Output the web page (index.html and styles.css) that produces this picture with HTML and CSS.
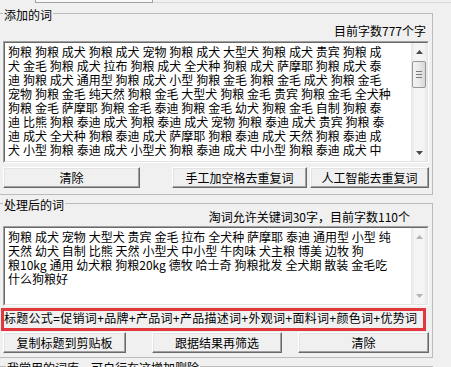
FILE: index.html
```html
<!DOCTYPE html>
<html lang="zh-CN">
<head>
<meta charset="utf-8">
<title>词处理</title>
<link rel="stylesheet" href="styles.css">
</head>
<body>
<div class="topstrip"><div class="tab-a"></div><div class="tab-b"></div></div>

<fieldset class="group g1">
  <legend>添加的词</legend>
  <div class="count c1">目前字数777个字</div>
  <div class="textbox tb1">
    <div class="inner">
      <div class="text">
        <div>狗粮 狗粮 成犬 狗粮 成犬 宠物 狗粮 成犬 大型犬 狗粮 成犬 贵宾 狗粮 成</div>
        <div>犬 金毛 狗粮 成犬 拉布 狗粮 成犬 全犬种 狗粮 成犬 萨摩耶 狗粮 成犬 泰</div>
        <div>迪 狗粮 成犬 通用型 狗粮 成犬 小型 狗粮 金毛 狗粮 金毛 成犬 狗粮 金毛</div>
        <div>宠物 狗粮 金毛 纯天然 狗粮 金毛 大型犬 狗粮 金毛 贵宾 狗粮 金毛 全犬种</div>
        <div>狗粮 金毛 萨摩耶 狗粮 金毛 泰迪 狗粮 金毛 幼犬 狗粮 金毛 自制 狗粮 泰</div>
        <div>迪 比熊 狗粮 泰迪 成犬 狗粮 泰迪 成犬 宠物 狗粮 泰迪 成犬 贵宾 狗粮 泰</div>
        <div>迪 成犬 全犬种 狗粮 泰迪 成犬 萨摩耶 狗粮 泰迪 成犬 天然 狗粮 泰迪 成</div>
        <div>犬 小型 狗粮 泰迪 成犬 小型犬 狗粮 泰迪 成犬 中小型 狗粮 泰迪 成犬 中</div>
      </div>
      <div class="vscroll">
        <span class="sbtn"><svg width="7" height="4" viewBox="0 0 7 4"><polygon points="0,4 3.5,0 7,4" fill="#4a4a4a"/></svg></span>
        <span class="thumb"><svg width="6" height="7" viewBox="0 0 6 7"><rect x="0" y="0" width="6" height="1" fill="#7a7a7a"/><rect x="0" y="3" width="6" height="1" fill="#7a7a7a"/><rect x="0" y="6" width="6" height="1" fill="#7a7a7a"/></svg></span>
        <span class="track-fill"></span>
        <span class="sbtn"><svg width="7" height="4" viewBox="0 0 7 4"><polygon points="0,0 7,0 3.5,4" fill="#4a4a4a"/></svg></span>
      </div>
    </div>
  </div>
  <div class="btnrow r1">
    <button class="btn b-clear1">清除</button>
    <button class="btn b-manual">手工加空格去重复词</button>
    <button class="btn b-ai">人工智能去重复词</button>
  </div>
</fieldset>

<fieldset class="group g2">
  <legend>处理后的词</legend>
  <div class="count c2">淘词允许关键词30字，目前字数110个</div>
  <div class="textbox tb2">
    <div class="inner">
      <div class="text">
        <div>狗粮 成犬 宠物 大型犬 贵宾 金毛 拉布 全犬种 萨摩耶 泰迪 通用型 小型 纯</div>
        <div>天然 幼犬 自制 比熊 天然 小型犬 中小型 牛肉味 犬主粮 博美 边牧 狗</div>
        <div>粮10kg 通用 幼犬粮 狗粮20kg 德牧 哈士奇 狗粮批发 全犬期 散装 金毛吃</div>
        <div>什么狗粮好</div>
      </div>
      <div class="vscroll">
        <span class="sbtn"><svg width="7" height="4" viewBox="0 0 7 4"><polygon points="0,4 3.5,0 7,4" fill="#b4b4b4"/></svg></span>
        <span class="track-fill"></span>
        <span class="sbtn"><svg width="7" height="4" viewBox="0 0 7 4"><polygon points="0,0 7,0 3.5,4" fill="#b4b4b4"/></svg></span>
      </div>
    </div>
  </div>
  <div class="formula">标题公式=促销词+品牌+产品词+产品描述词+外观词+面料词+颜色词+优势词</div>
  <div class="btnrow r2">
    <button class="btn b-copy">复制标题到剪贴板</button>
    <button class="btn b-filter">跟据结果再筛选</button>
    <button class="btn b-clear2">清除</button>
  </div>
</fieldset>

<fieldset class="group g3">
  <legend>我常用的词库，可自行在这增加删除</legend>
</fieldset>
</body>
</html>
```

FILE: styles.css
```css
* { box-sizing: border-box; }
html, body { margin: 0; padding: 0; }
body {
  width: 451px;
  height: 367px;
  overflow: hidden;
  background: #f0f0f0;
  font-family: "Noto Sans CJK SC", "Noto Sans", sans-serif;
  font-size: 12px;
  color: #000;
}

.topstrip { display: flex; height: 3px; }
.tab-a {
  margin-left: 35px;
  width: 118px;
  border: 1px solid #a0a0a0;
  border-top: 0;
  background: #f9f9f9;
}
.tab-b {
  flex: 1;
  border-bottom: 1px solid #d8d8d8;
}

.group {
  margin: 0 0 0 -1px;
  width: 434px;
  min-width: 0;
  border: 1px solid #bcbcbc;
  padding: 0 3px;
}
.group legend {
  padding: 4px 1px 0;
  line-height: 12px;
  font-size: 12px;
}
.g1 { margin-top: 2px; padding-bottom: 6px; }
.g2 { padding-bottom: 4px; }
.g3 legend { margin-left: 3px; }

.count { text-align: right; }
.c1 { line-height: 14px; margin: 3px 3px 3px 0; }
.c2 { line-height: 12px; margin: 0 19px 3px 0; }

.textbox {
  background: #fff;
  border: 1px solid;
  border-color: #a0a0a0 #ffffff #ffffff #a0a0a0;
}
.textbox .inner {
  display: flex;
  height: 100%;
  border: 1px solid;
  border-color: #696969 #e3e3e3 #e3e3e3 #696969;
}
.tb1 { height: 122px; }
.tb2 { height: 80px; }

.text {
  flex: 1;
  min-width: 0;
  padding: 2px 0 0 3px;
  line-height: 14px;
  overflow: hidden;
}
.text > div {
  white-space: nowrap;
  word-spacing: 0.2px;
}

.vscroll {
  width: 16px;
  flex: none;
  display: flex;
  flex-direction: column;
  background: linear-gradient(to right, #e6e6e6, #f5f5f5 25%, #f5f5f5 75%, #ebebeb);
}
.sbtn {
  height: 17px;
  flex: none;
  display: flex;
  align-items: center;
  justify-content: center;
}
.thumb {
  margin: 1px 1px 0 1px;
  height: 27px;
  flex: none;
  border: 1px solid #979797;
  border-radius: 2px;
  background: linear-gradient(to right, #f4f4f4, #e9e9e9 50%, #d8d8d8);
  display: flex;
  align-items: center;
  justify-content: center;
}
.track-fill { flex: 1; }

.btnrow { display: flex; height: 21px; }
.r1 { margin-top: 4px; }
.r2 { margin-top: 1px; }
.btn {
  height: 21px;
  padding: 0;
  font-family: inherit;
  font-size: 12px;
  line-height: 17px;
  color: #000;
  background: #f0f0f0;
  border: 1px solid;
  border-color: #ffffff #696969 #696969 #ffffff;
  box-shadow: inset -1px -1px 0 #a0a0a0, inset 1px 1px 0 #e3e3e3;
}
.b-clear1 { width: 137px; margin-right: 32px; }
.b-manual { width: 135px; margin-right: 3px; }
.b-ai { width: 119px; }
.b-copy { width: 123px; margin-right: 26px; }
.b-filter { width: 130px; margin-right: 16px; }
.b-clear2 { width: 131px; }

.formula {
  margin: 2px 0 0 -2px;
  width: 425px;
  height: 23px;
  border: 3px solid #e2383d;
  padding-left: 0;
  font-family: "Liberation Sans", "Noto Sans CJK SC", sans-serif;
  letter-spacing: 0.25px;
  line-height: 17px;
  white-space: nowrap;
  overflow: hidden;
}
```
